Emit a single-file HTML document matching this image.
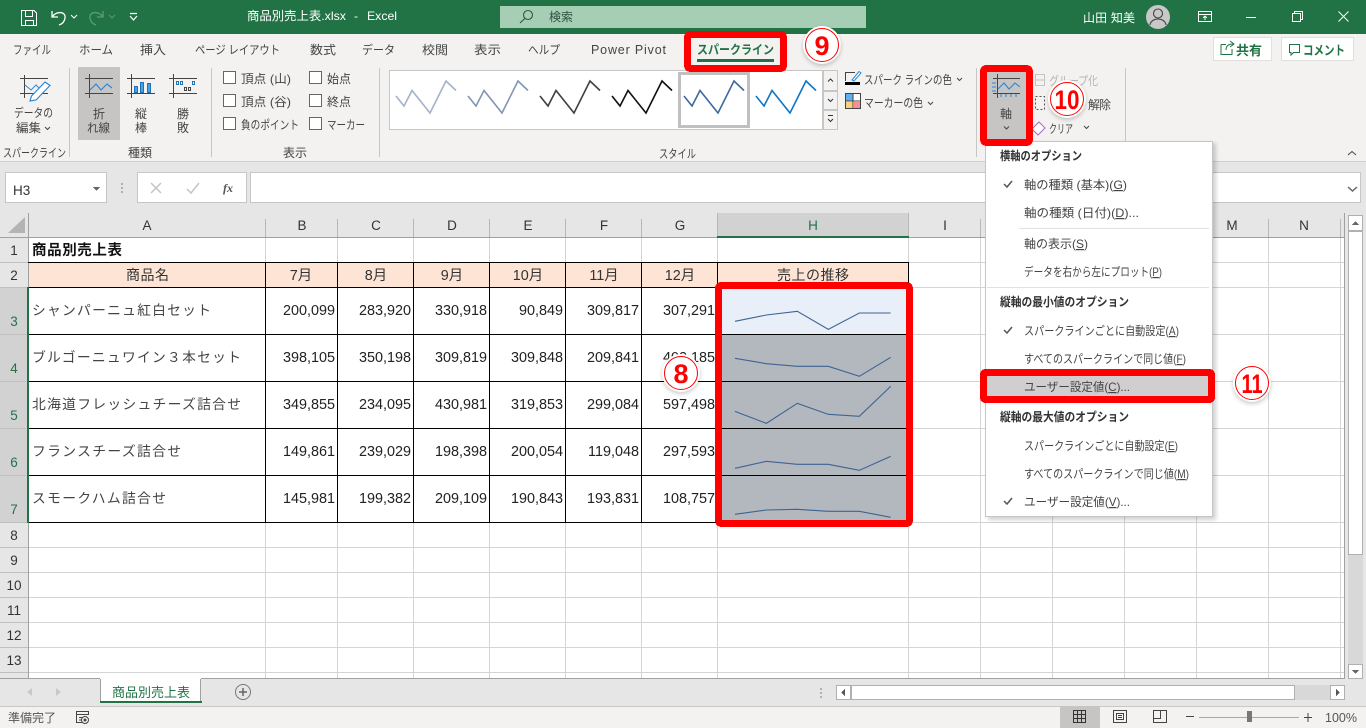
<!DOCTYPE html>
<html lang="ja">
<head>
<meta charset="utf-8">
<title>商品別売上表.xlsx - Excel</title>
<style>
html,body{margin:0;padding:0;width:1366px;height:728px;overflow:hidden;background:#fff}
svg{display:block;position:absolute;left:0;top:0}
text{font-family:"Liberation Sans","Noto Sans CJK JP",sans-serif;font-size:12px;fill:#444;white-space:pre}
.w{fill:#fff}
.d{fill:#444}
.b{font-weight:700}
.h{font-size:13.5px;fill:#333;text-anchor:middle}
.r{font-size:13.5px;fill:#333;text-anchor:middle}
.rs{font-size:13.5px;fill:#217346;text-anchor:middle}
.c{font-size:13.8px;fill:#222}
.n{font-size:14.4px;fill:#222;text-anchor:end}
.m{font-size:12px;fill:#444}
.mb{font-size:12px;fill:#333;font-weight:700}
.g{stroke:#d4d4d4;stroke-width:1;fill:none}
.k{stroke:#000;stroke-width:1;fill:none}
.ico{fill:none;stroke:#444;stroke-width:1}
.badge{font-family:"Liberation Sans",sans-serif;font-weight:700;fill:#f00;text-anchor:middle}
</style>
</head>
<body>
<svg width="1366" height="728" viewBox="0 0 1366 728" xmlns="http://www.w3.org/2000/svg" shape-rendering="crispEdges">
<defs>
<filter id="sh" x="-30%" y="-30%" width="160%" height="160%"><feGaussianBlur stdDeviation="2"/></filter>
<path id="spk" d="M396 96L404 106L412 90.5L430 113L446 81L456 90.5" fill="none" stroke-width="1.6" shape-rendering="geometricPrecision"/>
</defs>

<!-- title bar -->
<rect x="0" y="0" width="1366" height="34" fill="#217346"/>
<g fill="none" stroke="#fff" stroke-width="1" >
<path d="M21.5 10.5H34L36.5 13V25.5H21.5Z"/><path d="M25.5 10.5V16.5H32.5V10.5M25.5 25.5V20.5H33.5V25.5"/>
</g>
<g shape-rendering="geometricPrecision" fill="none">
<path d="M52 11V17H58M52.5 16.5C56 11 66 11 65 18C64.500 22 62 24 59 25" stroke="#fff" stroke-width="1.3"/>
<path d="M71 15L74 18L77 15" stroke="#fff" stroke-width="1"/>
<path d="M103 11V17H97M102.500 16.500C99 11 89 11 90 18C90.500 22 93 24 96 25" stroke="#5b9c78" stroke-width="1.3"/>
<path d="M109 15L112 18L115 15" stroke="#5b9c78" stroke-width="1"/>
<path d="M130 13.500H137M130 16L133.500 20L137 16" stroke="#fff" stroke-width="1.2"/>
</g>
<text class="w" x="247" y="20" textLength="99" lengthAdjust="spacingAndGlyphs">商品別売上表.xlsx</text>
<text class="w" x="354" y="20">-</text>
<text class="w" x="367" y="20" textLength="30" lengthAdjust="spacingAndGlyphs">Excel</text>
<rect x="500" y="6" width="366" height="22" fill="#a5ceb5"/>
<g shape-rendering="geometricPrecision" fill="none" stroke="#2a5a3f" stroke-width="1.1"><circle cx="528" cy="15" r="4.500"/><path d="M524.800 18.500L520 23"/></g>
<text x="549" y="21" textLength="24" lengthAdjust="spacingAndGlyphs" style="fill:#2f4f3f">検索</text>
<text class="w" x="1083" y="22" textLength="52" lengthAdjust="spacing">山田 知美</text>
<g shape-rendering="geometricPrecision"><circle cx="1158" cy="17" r="12" fill="#c8c8c8"/><circle cx="1158" cy="13.500" r="4.500" fill="none" stroke="#444" stroke-width="1.1"/><path d="M1150 25C1151 17 1165 17 1166 25" fill="none" stroke="#444" stroke-width="1.1"/></g>
<g fill="none" stroke="#fff" stroke-width="1">
<path d="M1198.500 11.500H1211.500V21.500H1198.500ZM1198.500 14.500H1211.500M1205 20V16M1203 18L1205 16L1207 18"/>
<path d="M1246 17.500H1256"/>
<path d="M1292.500 13.500H1300.500V21.500H1292.500ZM1294.500 13V11.500H1302.500V19.500H1301"/>
</g>
<path d="M1338.500 11.500L1348.500 21.500M1348.500 11.500L1338.500 21.500" stroke="#fff" stroke-width="1" shape-rendering="geometricPrecision"/>

<!-- ribbon -->
<rect x="0" y="34" width="1366" height="128" fill="#f3f2f1"/>
<rect x="0" y="161" width="1366" height="5" fill="#d8d8d8"/>
<rect x="0" y="162" width="1366" height="51" fill="#e6e6e6"/>
<rect x="0" y="161" width="1366" height="1" fill="#cfcfcf"/>
<text x="13" y="54" textLength="38" lengthAdjust="spacingAndGlyphs">ファイル</text>
<text x="79" y="54" textLength="34" lengthAdjust="spacingAndGlyphs">ホーム</text>
<text x="140" y="54" textLength="26" lengthAdjust="spacingAndGlyphs">挿入</text>
<text x="195" y="54" textLength="85" lengthAdjust="spacingAndGlyphs">ページ レイアウト</text>
<text x="310" y="54" textLength="26" lengthAdjust="spacingAndGlyphs">数式</text>
<text x="362" y="54" textLength="33" lengthAdjust="spacingAndGlyphs">データ</text>
<text x="422" y="54" textLength="26" lengthAdjust="spacingAndGlyphs">校閲</text>
<text x="474" y="54" textLength="27" lengthAdjust="spacingAndGlyphs">表示</text>
<text x="528" y="54" textLength="32" lengthAdjust="spacingAndGlyphs">ヘルプ</text>
<text x="591" y="54" textLength="75" lengthAdjust="spacing" style="font-size:12.500px">Power Pivot</text>

<!-- share / comment -->
<rect x="1213.500" y="37.500" width="58" height="23" fill="#fff" stroke="#e1dfdd"/>
<path d="M1221 44.500H1226M1221 44.500V54.500H1232V49M1226 50C1226 45 1230 44 1233 44M1230 41L1234 44L1230 47" fill="none" stroke="#217346" stroke-width="1" shape-rendering="geometricPrecision"/>
<text x="1236" y="55" textLength="26" lengthAdjust="spacingAndGlyphs" class="b" style="fill:#217346;font-size:13px">共有</text>
<rect x="1281.500" y="37.500" width="72" height="23" fill="#fff" stroke="#e1dfdd"/>
<path d="M1289.500 44.500H1299.500V52.500H1293.500L1291 55V52.500H1289.500Z" fill="none" stroke="#217346"/>
<text x="1303" y="55" textLength="42" lengthAdjust="spacingAndGlyphs" class="b" style="fill:#217346;font-size:13px">コメント</text>

<!-- separators -->
<g fill="#c8c6c4"><rect x="69" y="68" width="1" height="89"/><rect x="211" y="68" width="1" height="89"/><rect x="379" y="68" width="1" height="89"/><rect x="976" y="68" width="1" height="89"/><rect x="1125" y="68" width="1" height="89"/></g>

<!-- edit data -->
<g fill="none" stroke="#444"><path d="M20 78.500H48M20 93.500H48M24.500 75V98"/></g>
<path d="M25 85L31 90L36 85L41 90L46 86" fill="none" stroke="#2b88d8" stroke-width="1" shape-rendering="geometricPrecision"/>
<path d="M45 82L50 85.500L36 100L30 101L31.500 96Z" fill="#fff" stroke="#2b88d8" stroke-width="1.200" shape-rendering="geometricPrecision"/>
<text x="14" y="117" textLength="39" lengthAdjust="spacingAndGlyphs">データの</text>
<text x="16" y="132" textLength="25" lengthAdjust="spacingAndGlyphs">編集</text>
<path d="M45 127L47.500 129.500L50 127" fill="none" stroke="#444" shape-rendering="geometricPrecision"/>
<text x="3" y="157" textLength="63" lengthAdjust="spacingAndGlyphs">スパークライン</text>

<!-- type buttons -->
<rect x="78" y="67" width="42" height="73" fill="#c6c5c4"/>
<g fill="none" stroke="#444">
<path d="M85 78.500H113M85 93.500H113M89.500 74V98"/>
<path d="M127 78.500H155M127 93.500H155M131.500 74V98"/>
<path d="M169 78.500H197M169 93.500H197M173.500 74V98"/>
</g>
<path d="M90 90L96 84L101 90L107 84L112 88" fill="none" stroke="#2b88d8" stroke-width="1.200" shape-rendering="geometricPrecision"/>
<g fill="#4aa0e0" stroke="#1f74b8"><rect x="134.500" y="86.500" width="3" height="6"/><rect x="140.500" y="82.500" width="3" height="10"/><rect x="147.500" y="83.500" width="3" height="9"/></g>
<g fill="none" stroke="#1f74b8"><rect x="176.500" y="81.500" width="2" height="3"/><rect x="180.500" y="81.500" width="2" height="3"/><rect x="192.500" y="81.500" width="2" height="3"/></g>
<g fill="none" stroke="#444"><rect x="184.500" y="87.500" width="2" height="3"/><rect x="188.500" y="87.500" width="2" height="3"/></g>
<text x="93" y="118" textLength="12" >折</text>
<text x="87" y="132" textLength="23" lengthAdjust="spacingAndGlyphs">れ線</text>
<text x="135" y="118">縦</text><text x="135" y="132">棒</text>
<text x="177" y="118">勝</text><text x="177" y="132">敗</text>
<text x="128" y="157" textLength="24">種類</text>

<!-- check boxes -->
<g fill="#fff" stroke="#666">
<rect x="223.500" y="71.500" width="12" height="12"/><rect x="223.500" y="94.500" width="12" height="12"/><rect x="223.500" y="117.500" width="12" height="12"/>
<rect x="309.500" y="71.500" width="12" height="12"/><rect x="309.500" y="94.500" width="12" height="12"/><rect x="309.500" y="117.500" width="12" height="12"/>
</g>
<text x="241" y="83" textLength="50" lengthAdjust="spacingAndGlyphs">頂点 (山)</text>
<text x="241" y="106" textLength="50" lengthAdjust="spacingAndGlyphs">頂点 (谷)</text>
<text x="241" y="129" textLength="58" lengthAdjust="spacingAndGlyphs">負のポイント</text>
<text x="327" y="83" textLength="24">始点</text>
<text x="327" y="106" textLength="24">終点</text>
<text x="327" y="129" textLength="38" lengthAdjust="spacingAndGlyphs">マーカー</text>
<text x="283" y="157" textLength="24">表示</text>

<!-- gallery -->
<rect x="389.500" y="70.500" width="433" height="59" fill="#fff" stroke="#c6c6c6"/>
<use href="#spk" stroke="#a6b2c9"/>
<use href="#spk" x="72" stroke="#8295b6"/>
<use href="#spk" x="144" stroke="#404040"/>
<use href="#spk" x="216" stroke="#111"/>
<rect x="679.500" y="73.500" width="69" height="53" fill="#fff" stroke="#c0c0c0" stroke-width="3"/>
<use href="#spk" x="288" stroke="#3f6a9f"/>
<use href="#spk" x="360" stroke="#0f76c6"/>
<g fill="#f3f2f1" stroke="#c6c6c6"><rect x="823.500" y="70.500" width="14" height="20"/><rect x="823.500" y="91.500" width="14" height="18"/><rect x="823.500" y="110.500" width="14" height="19"/></g>
<g fill="none" stroke="#333" shape-rendering="geometricPrecision"><path d="M828 81.500L830.500 79L833 81.500M828 99L830.500 101.500L833 99M828 115.500H833M828 119L830.500 121.500L833 119"/></g>
<text x="659" y="158" textLength="37" lengthAdjust="spacingAndGlyphs">スタイル</text>

<!-- colour buttons -->
<rect x="845" y="82" width="15" height="3" fill="#000"/>
<path d="M845.500 81V72.500H855" fill="none" stroke="#444"/>
<path d="M852 80L859 71.500L861 73L854 81Z" fill="#fff" stroke="#2b88d8" shape-rendering="geometricPrecision"/>
<rect x="845.500" y="93.500" width="15" height="15" fill="#fff" stroke="#444"/>
<rect x="846" y="94" width="7" height="7" fill="#63b0ee"/><rect x="846" y="102" width="7" height="6" fill="#fbd07c"/><rect x="854" y="102" width="6" height="6" fill="#f78f94"/>
<path d="M845.500 101H860.500M853 93.500V108.500" stroke="#444" fill="none"/>
<text x="864" y="84" textLength="88" lengthAdjust="spacingAndGlyphs">スパーク ラインの色</text>
<path d="M957 78L959.500 80.500L962 78" fill="none" stroke="#444" shape-rendering="geometricPrecision"/>
<text x="864" y="107" textLength="59" lengthAdjust="spacingAndGlyphs">マーカーの色</text>
<path d="M928 102L930.500 104.500L933 102" fill="none" stroke="#444" shape-rendering="geometricPrecision"/>

<!-- group section -->
<text x="1049" y="85" textLength="49" lengthAdjust="spacingAndGlyphs" style="fill:#b4b4b4">グループ化</text>
<path d="M1035.500 74.500H1044.500V85.500H1035.500ZM1035.500 80H1044.500" fill="none" stroke="#c4c4c4"/>
<path d="M1035.500 96.500H1044.500V109.500H1035.500Z" fill="none" stroke="#555" stroke-dasharray="2 2"/>
<text x="1088" y="109" textLength="23">解除</text>
<path d="M1039 122L1045 128L1038 135L1032 129Z" fill="#fff" stroke="#b065c0" shape-rendering="geometricPrecision"/>
<text x="1049" y="133" textLength="24" lengthAdjust="spacingAndGlyphs">クリア</text>
<path d="M1084 126L1086.500 128.500L1089 126" fill="none" stroke="#444" shape-rendering="geometricPrecision"/>
<path d="M1348 155L1352 151.500L1356 155" fill="none" stroke="#444" shape-rendering="geometricPrecision"/>

<!-- formula bar -->
<rect x="5.500" y="172.500" width="101" height="30" fill="#fff" stroke="#c6c6c6"/>
<text x="13" y="195" style="font-size:13.500px;fill:#333">H3</text>
<path d="M93 187H100L96.500 191Z" fill="#666"/>
<g fill="#b0b0b0"><rect x="121" y="183" width="2" height="2"/><rect x="121" y="187" width="2" height="2"/><rect x="121" y="191" width="2" height="2"/></g>
<rect x="137.500" y="172.500" width="109" height="30" fill="#fff" stroke="#c6c6c6"/>
<g fill="none" stroke="#c4c4c4" stroke-width="1.500" shape-rendering="geometricPrecision"><path d="M151 183L161 193M161 183L151 193"/><path d="M187 189L191 193L199 183"/></g>
<text x="223" y="192" style="font-family:'Liberation Serif',serif;font-style:italic;font-weight:700;font-size:12px;fill:#555">fx</text>
<rect x="250.500" y="172.500" width="1110" height="30" fill="#fff" stroke="#c6c6c6"/>
<path d="M1348 187L1352.500 191L1357 187" fill="none" stroke="#666" stroke-width="1.500" shape-rendering="geometricPrecision"/>

<!-- sheet -->
<rect x="0" y="213" width="1344" height="24" fill="#e6e6e6"/>
<rect x="0" y="237" width="28" height="441" fill="#e6e6e6"/>
<rect x="29" y="238" width="1315" height="440" fill="#fff"/>
<path d="M8 233L25 233L25 217Z" fill="#b4b4b4" shape-rendering="geometricPrecision"/>
<rect x="717" y="213" width="191" height="24" fill="#d2d2d2"/>
<rect x="0" y="288" width="28" height="234" fill="#d2d2d2"/>
<!-- gridlines -->
<path class="g" d="M29 262.500H1344M29 287.500H1344M29 334.500H1344M29 381.500H1344M29 428.500H1344M29 475.500H1344M29 522.500H1344M29 547.500H1344M29 572.500H1344M29 597.500H1344M29 622.500H1344M29 647.500H1344M29 672.500H1344"/>
<path class="g" d="M265.500 238V678M337.500 238V678M413.500 238V678M489.500 238V678M565.500 238V678M641.500 238V678M717.500 238V678M908.500 238V678M980.500 238V678M1052.500 238V678M1124.500 238V678M1196.500 238V678M1268.500 238V678M1340.500 238V678"/>
<!-- header lines -->
<path d="M0 237.500H717M908 237.500H1344" stroke="#a0a0a0" fill="none"/>
<path d="M265.500 219V237M337.500 219V237M413.500 219V237M489.500 219V237M565.500 219V237M641.500 219V237M717.500 213V237M908.500 213V237M980.500 219V237M1052.500 219V237M1124.500 219V237M1196.500 219V237M1268.500 219V237M1340.500 219V237" stroke="#b8b8b8" fill="none"/>
<path d="M28.500 213V678" stroke="#a0a0a0" fill="none"/>
<path d="M0 262.500H28M0 287.500H28M0 334.500H28M0 381.500H28M0 428.500H28M0 475.500H28M0 522.500H28M0 547.500H28M0 572.500H28M0 597.500H28M0 622.500H28M0 647.500H28M0 672.500H28" stroke="#c0c0c0" fill="none"/>
<rect x="717" y="236" width="192" height="2" fill="#217346"/>
<rect x="27" y="287" width="2" height="236" fill="#217346"/>
<rect x="1344" y="213" width="1" height="466" fill="#a0a0a0"/>
<rect x="0" y="678" width="1345" height="1" fill="#a0a0a0"/>
<!-- column letters -->
<text class="h" x="147" y="230">A</text><text class="h" x="302" y="230">B</text><text class="h" x="376" y="230">C</text><text class="h" x="452" y="230">D</text><text class="h" x="528" y="230">E</text><text class="h" x="604" y="230">F</text><text class="h" x="680" y="230">G</text>
<text class="h" x="813" y="230" style="fill:#217346">H</text>
<text class="h" x="945" y="230">I</text><text class="h" x="1232" y="230">M</text><text class="h" x="1304" y="230">N</text>
<!-- row numbers -->
<text class="r" x="14" y="255">1</text><text class="r" x="14" y="280">2</text>
<text class="rs" x="14" y="326">3</text><text class="rs" x="14" y="373">4</text><text class="rs" x="14" y="420">5</text><text class="rs" x="14" y="467">6</text><text class="rs" x="14" y="514">7</text>
<text class="r" x="14" y="540">8</text><text class="r" x="14" y="565">9</text><text class="r" x="14" y="590">10</text><text class="r" x="14" y="615">11</text><text class="r" x="14" y="640">12</text><text class="r" x="14" y="665">13</text>

<!-- data -->
<rect x="29" y="263" width="879" height="24" fill="#fde4d5"/>
<rect x="718" y="288" width="190" height="46" fill="#e8eff9"/>
<rect x="718" y="335" width="190" height="187" fill="#b3b8bf"/>
<path class="k" d="M28 262.500H909M28 287.500H909M28 334.500H909M28 381.500H909M28 428.500H909M28 475.500H909M28 522.500H909M265.500 262V523M337.500 262V523M413.500 262V523M489.500 262V523M565.500 262V523M641.500 262V523M717.500 262V523M908.500 262V523"/>
<rect x="27" y="287" width="2" height="236" fill="#217346"/>
<text x="32" y="255" class="b" textLength="90" lengthAdjust="spacing" style="font-size:14.500px;fill:#111">商品別売上表</text>
<text x="126" y="280" textLength="43" lengthAdjust="spacing" style="font-size:14px;fill:#333">商品名</text>
<text class="n" x="301" y="280" style="text-anchor:middle;fill:#333">7月</text>
<text class="n" x="376" y="280" style="text-anchor:middle;fill:#333">8月</text>
<text class="n" x="452" y="280" style="text-anchor:middle;fill:#333">9月</text>
<text class="n" x="528" y="280" style="text-anchor:middle;fill:#333">10月</text>
<text class="n" x="604" y="280" style="text-anchor:middle;fill:#333">11月</text>
<text class="n" x="680" y="280" style="text-anchor:middle;fill:#333">12月</text>
<text x="777" y="280" textLength="72" lengthAdjust="spacing" style="font-size:14px;fill:#333">売上の推移</text>

<text class="c" x="32" y="315" textLength="179" lengthAdjust="spacing" style="fill:#444">シャンパーニュ紅白セット</text>
<text class="c" x="32" y="362" textLength="209" lengthAdjust="spacing" style="fill:#444">ブルゴーニュワイン３本セット</text>
<text class="c" x="32" y="409" textLength="209" lengthAdjust="spacing" style="fill:#444">北海道フレッシュチーズ詰合せ</text>
<text class="c" x="32" y="456" textLength="149" lengthAdjust="spacing" style="fill:#444">フランスチーズ詰合せ</text>
<text class="c" x="32" y="503" textLength="134" lengthAdjust="spacing" style="fill:#444">スモークハム詰合せ</text>

<text class="n" x="335" y="315">200,099</text><text class="n" x="411" y="315">283,920</text><text class="n" x="487" y="315">330,918</text><text class="n" x="563" y="315">90,849</text><text class="n" x="639" y="315">309,817</text><text class="n" x="715" y="315">307,291</text>
<text class="n" x="335" y="362">398,105</text><text class="n" x="411" y="362">350,198</text><text class="n" x="487" y="362">309,819</text><text class="n" x="563" y="362">309,848</text><text class="n" x="639" y="362">209,841</text><text class="n" x="715" y="362">402,185</text>
<text class="n" x="335" y="409">349,855</text><text class="n" x="411" y="409">234,095</text><text class="n" x="487" y="409">430,981</text><text class="n" x="563" y="409">319,853</text><text class="n" x="639" y="409">299,084</text><text class="n" x="715" y="409">597,498</text>
<text class="n" x="335" y="456">149,861</text><text class="n" x="411" y="456">239,029</text><text class="n" x="487" y="456">198,398</text><text class="n" x="563" y="456">200,054</text><text class="n" x="639" y="456">119,048</text><text class="n" x="715" y="456">297,593</text>
<text class="n" x="335" y="503">145,981</text><text class="n" x="411" y="503">199,382</text><text class="n" x="487" y="503">209,109</text><text class="n" x="563" y="503">190,843</text><text class="n" x="639" y="503">193,831</text><text class="n" x="715" y="503">108,757</text>

<!-- sparklines -->
<g transform="translate(640 260) scale(.33333)" fill="none" stroke="#3f6391" stroke-width="3.300" shape-rendering="geometricPrecision">
<path d="M285 184L379 165L472 154L565 208L658 159L752 159"/>
<path d="M285 295L379 311L472 319L565 319L658 349L752 292"/>
<path d="M285 454L379 490L472 430L565 463L658 469L752 379"/>
<path d="M285 625L379 604L472 613L565 613L658 631L752 589"/>
<path d="M285 763L379 750L472 748L565 754L658 754L752 772"/>
</g>
<rect x="718.500" y="285.500" width="191" height="238" rx="3" fill="none" stroke="#f00" stroke-width="7"/>

<!-- scrollbars -->
<rect x="1345" y="213" width="21" height="493" fill="#e6e6e6"/>
<rect x="1348" y="231" width="15" height="433" fill="#d8d8d8"/>
<rect x="1348.500" y="231.500" width="14" height="323" fill="#fff" stroke="#b0b0b0"/>
<rect x="1348.500" y="215.500" width="14" height="15" fill="#fff" stroke="#b0b0b0"/>
<path d="M1352 225H1359L1355.500 221Z" fill="#666"/>
<rect x="1348.500" y="664.500" width="14" height="14" fill="#fff" stroke="#b0b0b0"/>
<path d="M1352 670H1359L1355.500 674Z" fill="#666"/>

<!-- tabs strip -->
<rect x="0" y="679" width="1345" height="27" fill="#e6e6e6"/>
<path d="M32 688V696L27 692Z" fill="#c8c8c8"/><path d="M56 688V696L61 692Z" fill="#c8c8c8"/>
<rect x="100" y="678" width="101" height="24" fill="#fff"/>
<path d="M100.500 678V702M200.500 678V702" stroke="#a0a0a0" fill="none"/>
<rect x="100" y="701" width="102" height="2" fill="#217346"/>
<rect x="100" y="678" width="101" height="1" fill="#fff"/>
<text x="112" y="697" textLength="78" lengthAdjust="spacing" style="font-size:13px;fill:#217346">商品別売上表</text>
<g shape-rendering="geometricPrecision"><circle cx="243" cy="692" r="7.500" fill="none" stroke="#777"/><path d="M239 692H247M243 688V696" stroke="#666" stroke-width="1.500"/></g>
<g fill="#b0b0b0"><rect x="820" y="688" width="2" height="2"/><rect x="820" y="692" width="2" height="2"/><rect x="820" y="696" width="2" height="2"/></g>
<rect x="836" y="685" width="509" height="15" fill="#d8d8d8"/>
<rect x="836.500" y="685.500" width="14" height="14" fill="#fff" stroke="#b0b0b0"/>
<path d="M845 689V696L841 692.500Z" fill="#555"/>
<rect x="851.500" y="685.500" width="443" height="14" fill="#fff" stroke="#b0b0b0"/>
<rect x="1330.500" y="685.500" width="14" height="14" fill="#fff" stroke="#b0b0b0"/>
<path d="M1336 689V696L1340 692.500Z" fill="#555"/>

<!-- status bar -->
<rect x="0" y="706" width="1366" height="22" fill="#f3f2f1"/>
<rect x="0" y="706" width="1366" height="1" fill="#c8c8c8"/>
<text x="8" y="722" textLength="48" style="fill:#555">準備完了</text>
<g fill="none" stroke="#444"><path d="M76.500 711.500H88.500V714.500H76.500ZM76.500 714.500V722.500H82M79 717.500H83M79 720H82"/><circle cx="85" cy="720" r="3.500" shape-rendering="geometricPrecision"/></g>
<circle cx="85" cy="720" r="1.500" fill="#444" shape-rendering="geometricPrecision"/>
<rect x="1060" y="706" width="40" height="22" fill="#c6c5c4"/>
<path d="M1073.500 710.500H1085.500V722.500H1073.500ZM1073.500 714.500H1085.500M1073.500 718.500H1085.500M1077.500 710.500V722.500M1081.500 710.500V722.500" fill="none" stroke="#333"/>
<path d="M1113.500 710.500H1126.500V722.500H1113.500ZM1116.500 713.500H1123.500V719.500H1116.500ZM1118 715.500H1122M1118 717.500H1122" fill="none" stroke="#444"/>
<path d="M1153.500 710.500H1166.500V722.500H1153.500ZM1153.500 718.500H1160.500V710.500" fill="none" stroke="#444"/>
<rect x="1186" y="716" width="8" height="1" fill="#444"/>
<rect x="1199" y="717" width="100" height="1" fill="#a8a8a8"/>
<rect x="1247" y="711" width="5" height="11" fill="#777"/>
<path d="M1304 717.500H1312M1308 713V722" stroke="#444" fill="none"/>
<text x="1325" y="722" textLength="32" lengthAdjust="spacing" style="font-size:12.500px;fill:#555">100%</text>

<!-- dropdown menu -->
<rect x="988" y="143" width="228" height="377" fill="#000" opacity=".18" filter="url(#sh)"/>
<rect x="985.500" y="141.500" width="227" height="375" fill="#fff" stroke="#c6c6c6"/>
<rect x="1019" y="228" width="190" height="1" fill="#e1e1e1"/>
<rect x="987" y="287" width="222" height="1" fill="#e1e1e1"/>
<text class="mb" x="1000" y="160" textLength="82" lengthAdjust="spacingAndGlyphs">横軸のオプション</text>
<text class="m" x="1024" y="189" textLength="103" lengthAdjust="spacingAndGlyphs">軸の種類 (基本)(<tspan text-decoration="underline">G</tspan>)</text>
<text class="m" x="1024" y="217" textLength="115" lengthAdjust="spacingAndGlyphs">軸の種類 (日付)(<tspan text-decoration="underline">D</tspan>)...</text>
<text class="m" x="1024" y="248" textLength="64" lengthAdjust="spacingAndGlyphs">軸の表示(<tspan text-decoration="underline">S</tspan>)</text>
<text class="m" x="1024" y="276" textLength="138" lengthAdjust="spacingAndGlyphs">データを右から左にプロット(<tspan text-decoration="underline">P</tspan>)</text>
<text class="mb" x="1000" y="306" textLength="129" lengthAdjust="spacingAndGlyphs">縦軸の最小値のオプション</text>
<text class="m" x="1024" y="335" textLength="155" lengthAdjust="spacingAndGlyphs">スパークラインごとに自動設定(<tspan text-decoration="underline">A</tspan>)</text>
<text class="m" x="1024" y="363" textLength="162" lengthAdjust="spacingAndGlyphs">すべてのスパークラインで同じ値(<tspan text-decoration="underline">F</tspan>)</text>
<rect x="983.500" y="372.500" width="228" height="27" rx="2" fill="#d0cece" stroke="#f00" stroke-width="7"/>
<text class="m" x="1024" y="391" textLength="106" lengthAdjust="spacingAndGlyphs">ユーザー設定値(<tspan text-decoration="underline">C</tspan>)...</text>
<text class="mb" x="1000" y="421" textLength="129" lengthAdjust="spacingAndGlyphs">縦軸の最大値のオプション</text>
<text class="m" x="1024" y="450" textLength="154" lengthAdjust="spacingAndGlyphs">スパークラインごとに自動設定(<tspan text-decoration="underline">E</tspan>)</text>
<text class="m" x="1024" y="478" textLength="165" lengthAdjust="spacingAndGlyphs">すべてのスパークラインで同じ値(<tspan text-decoration="underline">M</tspan>)</text>
<text class="m" x="1024" y="506" textLength="106" lengthAdjust="spacingAndGlyphs">ユーザー設定値(<tspan text-decoration="underline">V</tspan>)...</text>
<g fill="none" stroke="#555" stroke-width="1.500" shape-rendering="geometricPrecision"><path d="M1004 184L1007 187L1012 181"/><path d="M1004 330L1007 333L1012 327"/><path d="M1004 501L1007 504L1012 498"/></g>

<!-- axis button -->
<rect x="983.500" y="68.500" width="46" height="74" rx="3" fill="#c6c5c4" stroke="#f00" stroke-width="7"/>
<path d="M993 78.500H1020M993 93.500H1020M997.500 74V98" fill="none" stroke="#444"/>
<path d="M992 83H996M992 87H996M992 91H996M1001 94V97M1006 94V97M1011 94V97M1016 94V97" stroke="#2b88d8" fill="none"/>
<path d="M998 89L1004 83L1009 89L1015 83L1020 87" fill="none" stroke="#2b88d8" stroke-width="1.100" shape-rendering="geometricPrecision"/>
<text x="1000" y="118">軸</text>
<path d="M1004 126.500L1006.500 129L1009 126.500" fill="none" stroke="#444" shape-rendering="geometricPrecision"/>

<!-- tab highlight -->
<rect x="687.500" y="34.500" width="96" height="34" rx="3" fill="#f3f2f1" stroke="#f00" stroke-width="7"/>
<text x="697" y="54" textLength="77" lengthAdjust="spacingAndGlyphs" class="b" style="fill:#217346;font-size:12.500px">スパークライン</text>
<rect x="697" y="59" width="77" height="3" fill="#217346"/>

<!-- badges -->
<g shape-rendering="geometricPrecision">
<circle cx="681" cy="375" r="19" fill="#000" opacity=".2" filter="url(#sh)"/>
<circle cx="681" cy="373" r="19" fill="#fff"/>
<circle cx="681" cy="373" r="16.500" fill="none" stroke="#f00" stroke-width="1"/>
<text class="badge" x="681" y="383" style="font-size:27px">8</text>

<circle cx="822" cy="47" r="19" fill="#000" opacity=".2" filter="url(#sh)"/>
<circle cx="822" cy="45" r="19" fill="#fff"/>
<circle cx="822" cy="45" r="16.500" fill="none" stroke="#f00" stroke-width="1"/>
<text class="badge" x="822" y="55" style="font-size:27px">9</text>

<circle cx="1067" cy="101" r="19" fill="#000" opacity=".2" filter="url(#sh)"/>
<circle cx="1067" cy="99" r="19" fill="#fff"/>
<circle cx="1067" cy="99" r="16.500" fill="none" stroke="#f00" stroke-width="1"/>
<text class="badge" x="1067" y="109" textLength="25" lengthAdjust="spacingAndGlyphs" style="font-size:27px">10</text>

<circle cx="1252" cy="385" r="19" fill="#000" opacity=".2" filter="url(#sh)"/>
<circle cx="1252" cy="383" r="19" fill="#fff"/>
<circle cx="1252" cy="383" r="16.500" fill="none" stroke="#f00" stroke-width="1"/>
<text class="badge" x="1252" y="393" textLength="21" lengthAdjust="spacingAndGlyphs" style="font-size:27px">11</text>
</g>
</svg>
</body>
</html>
